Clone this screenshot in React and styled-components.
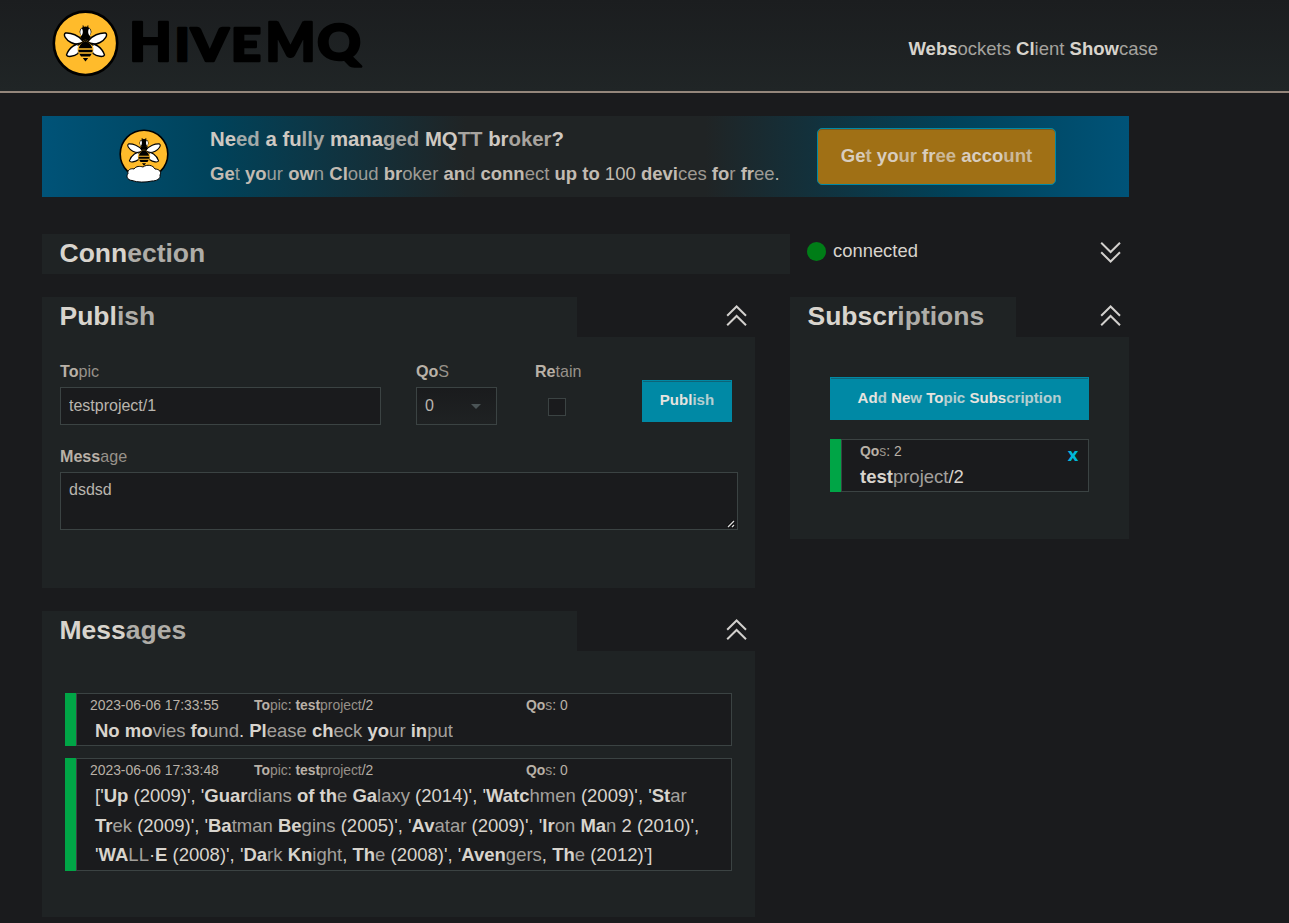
import React from "react";
import styled, { createGlobalStyle } from "styled-components";

const c = {
  page: "#1a1b1d",
  panel: "#1f2324",
  line: "#3b4343",
  teal: "#0089a5",
  green: "#00a546",
  bright: "#d8d4cd",
  muted: "#b9b1a7",
};

const GlobalStyle = createGlobalStyle`
  * { box-sizing: border-box; }
  html, body { margin: 0; background: ${c.page}; }
  body {
    height: 923px;
    overflow: hidden;
    color: ${c.bright};
    font-family: "Liberation Sans", Arial, sans-serif;
    font-size: 18.5px;
  }
  h1, h2, p { margin: 0; }
  svg { display: block; }
`;

const Lead = styled.b`
  font-weight: 700;
`;
const Tail = styled.span`
  opacity: ${(p) => p.$opacity};
`;

/* Emphasises the first letters of every word and fades the rest. */
const leadLength = (n) => (n < 2 ? n : n < 7 ? 2 : n < 13 ? 4 : 6);
function Bionic({ children, fade = 0.78 }) {
  return children.split(/([A-Za-z]+)/).map((part, i) => {
    if (i % 2 === 0) return part;
    const n = leadLength(part.length);
    return (
      <React.Fragment key={i}>
        <Lead>{part.slice(0, n)}</Lead>
        {part.length > n && <Tail $opacity={fade}>{part.slice(n)}</Tail>}
      </React.Fragment>
    );
  });
}

const Header = styled.header`
  display: flex;
  justify-content: space-between;
  align-items: flex-start;
  height: 93px;
  padding: 0 131px 0 52px;
  border-bottom: 2px solid #94867b;
  background: linear-gradient(#1b1d1f, #202526);
`;
const Tagline = styled.p`
  padding-top: 38px;
  line-height: 22px;
`;
const Page = styled.main`
  width: 1087px;
  margin: 23px 0 0 42px;
`;
const Banner = styled.section`
  display: flex;
  height: 81px;
  background: linear-gradient(
    90deg,
    #005378 0%,
    #00425a 16%,
    #202425 39%,
    #202425 61%,
    #00425a 84%,
    #005378 100%
  );
`;
const BannerIcon = styled.div`
  width: 168px;
  padding: 13px 0 0 77px;
`;
const BannerText = styled.div`
  width: 607px;
  padding-top: 11px;
  white-space: nowrap;
`;
const BannerTitle = styled.h2`
  font-size: 20.35px;
  line-height: 24px;
  color: #cfc9c2;
`;
const BannerLine = styled.p`
  padding-top: 11px;
  line-height: 23px;
  color: #c2bbb2;
`;
const AccountButton = styled.button`
  width: 239px;
  height: 57px;
  margin-top: 12px;
  padding: 0 0 1px;
  border: 1px solid #0089a5;
  border-radius: 5px;
  background: #a07015;
  box-shadow: inset 0 1px 0 #7d5a1c;
  color: #d8cdbf;
  font: 700 18.5px "Liberation Sans", Arial, sans-serif;
`;

const Row = styled.div`
  display: flex;
  align-items: flex-start;
  margin-top: ${(p) => p.$top}px;
`;
const Column = styled.div`
  width: ${(p) => p.$width}px;
  margin-right: ${(p) => p.$gap || 0}px;
`;
const PanelHead = styled.div`
  display: flex;
  justify-content: space-between;
  height: 40px;
  padding-right: 8px;
`;
const Title = styled.h1`
  width: ${(p) => p.$width}px;
  height: 40px;
  padding-left: 17.5px;
  background: ${c.panel};
  font-size: 26.5px;
  line-height: 38px;
`;
const PanelBody = styled.div`
  height: ${(p) => p.$height}px;
  padding: ${(p) => p.$padding};
  background: ${c.panel};
`;
const ToggleIcon = styled.svg`
  width: 21px;
  height: 22px;
  margin-top: ${(p) => (p.$down ? 0 : 8)}px;
  fill: none;
  stroke: #d2d0cd;
  stroke-width: 2;
  transform: ${(p) => (p.$down ? "scaleY(-1)" : "none")};
`;
const Status = styled.div`
  display: flex;
  align-items: center;
  width: 339px;
  height: 35px;
  padding: 0 8px 0 17px;
`;
const Dot = styled.span`
  width: 19px;
  height: 19px;
  margin-right: 7px;
  border-radius: 50%;
  background: #007d17;
`;
const StatusText = styled.span`
  flex: 1;
  padding-bottom: 2px;
  font-size: 18.4px;
`;

const Form = styled.div`
  display: flex;
`;
const Field = styled.div`
  width: ${(p) => p.$width}px;
`;
const Label = styled.label`
  display: block;
  height: 26px;
  color: ${c.muted};
  font-size: 16.1px;
  line-height: 20px;
`;
const Input = styled.input`
  display: block;
  width: 321px;
  height: 38px;
  padding: 0 8px 1px;
  border: 1px solid ${c.line};
  border-radius: 0;
  outline: 0;
  background: ${c.page};
  color: #b9b5ae;
  font: 16px "Liberation Sans", Arial, sans-serif;
`;
const Select = styled.div`
  display: flex;
  align-items: center;
  justify-content: space-between;
  width: 81px;
  height: 38px;
  padding: 0 15px 1px 8px;
  border: 1px solid ${c.line};
  background: linear-gradient(${c.page}, #1f2223);
  color: #b9b5ae;
  font-size: 16px;
`;
const Caret = styled.span`
  border: 5px solid transparent;
  border-top-color: #4b5456;
  border-bottom: 0;
  margin-top: 1px;
`;
const Checkbox = styled.div`
  width: 18px;
  height: 18px;
  margin: 11px 0 0 13px;
  border: 1px solid ${c.line};
  background: ${c.page};
`;
const TealButton = styled.button`
  width: ${(p) => p.$width}px;
  height: ${(p) => p.$height}px;
  margin-top: ${(p) => p.$top || 0}px;
  padding: 0 0 3px;
  border: 1px solid ${c.teal};
  background: ${c.teal};
  box-shadow: inset 0 1px 0 #0e6478;
  color: #e6e3df;
  font: 700 15.05px "Liberation Sans", Arial, sans-serif;
`;
const MessageField = styled.div`
  margin-top: 21px;
`;
const TextBox = styled.div`
  display: flex;
  justify-content: space-between;
  align-items: flex-end;
  width: 678px;
  height: 58px;
  padding-left: 8px;
  border: 1px solid ${c.line};
  background: ${c.page};
`;
const TextValue = styled.span`
  align-self: flex-start;
  padding-top: 7px;
  color: #b9b5ae;
  font-size: 16px;
  line-height: 20px;
`;

const Card = styled.article`
  display: flex;
  height: ${(p) => p.$height}px;
  margin-bottom: 12px;
`;
const Stripe = styled.div`
  width: 11px;
  background: ${c.green};
`;
const CardBody = styled.div`
  flex: 1;
  padding-left: ${(p) => p.$inset}px;
  border: 1px solid ${c.line};
  background: ${c.page};
`;
const Meta = styled.div`
  display: flex;
  height: 22px;
  color: ${c.muted};
  font-size: 13.88px;
  line-height: 23px;
`;
const MetaItem = styled.span`
  width: ${(p) => p.$width}px;
`;
const Payload = styled.p`
  padding-left: ${(p) => p.$indent || 0}px;
  line-height: 29.5px;
`;
const Line = styled.span`
  display: block;
  white-space: nowrap;
`;
const SubscriptionBody = styled.div`
  display: flex;
  justify-content: space-between;
  padding-right: 9.5px;
`;
const Remove = styled.span`
  padding-top: 6px;
  color: #00b7d8;
  font: 700 17px/18px "DejaVu Sans", sans-serif;
`;

function Bee() {
  return (
    <g>
      <g fill="#fff" stroke="#000" strokeWidth="1.400" strokeLinejoin="round">
        <path d="M31 31C27 25.500 19 22.500 13.500 23C10.500 24.500 14 30 19 32.500C23 34.500 28 34.500 31 33Z" />
        <path d="M36 31C40 25.500 48 22.500 53.500 23C56.500 24.500 53 30 48 32.500C44 34.500 39 34.500 36 33Z" />
        <path d="M31 33C24 33 17 37.500 14.500 45C15.500 47.500 22 46.500 26 43.500C27 40 28.500 36.500 32 34Z" />
        <path d="M36 33C43 33 50 37.500 52.500 45C51.500 47.500 45 46.500 41 43.500C40 40 38.500 36.500 35 34Z" />
      </g>
      <path d="M31.500 18L31 15.500M35.500 18L36 15.500" stroke="#000" strokeWidth="1.100" />
      <ellipse cx="33.500" cy="21.800" rx="5.900" ry="5.200" fill="#000" />
      <path d="M29.800 18.300C27.800 20.500 27.800 23.500 29.500 25.800C31.200 23.500 31.300 20.500 29.800 18.300ZM37.200 18.300C39.200 20.500 39.200 23.500 37.500 25.800C35.800 23.500 35.700 20.500 37.200 18.300Z" fill="#fff" />
      <path d="M28.500 26H38.500L37 31H30Z" fill="#000" />
      <path d="M33.500 29.500C29.500 31.500 25.500 35 25.500 39C25.500 43 28 46 30 47H37C39 46 41.500 43 41.500 39C41.500 35 37.500 31.500 33.500 29.500Z" fill="#ffbb2b" />
      <path d="M33.500 31C31 32 27.500 34.500 26.800 38.300H40.200C39.500 34.500 36 32 33.500 31Z" fill="#000" />
      <path d="M26.300 39.700H40.700L40.300 42.200H26.700ZM27.300 43.700H39.700L38 46.500H29Z" fill="#000" />
      <path d="M30.800 48H36.200L33.500 51.500Z" fill="#000" />
      <path d="M25.500 35.500L33.500 30L41.500 35.500" fill="none" stroke="#000" strokeWidth="1.200" />
    </g>
  );
}

const letters = [
  ["H", 129.300, 61.200, 52.500, 42.500],
  ["I", 174.800, 61.200, 46, 15],
  ["V", 191, 61.200, 46, 37.500],
  ["E", 231, 61.200, 46, 30],
  ["M", 265.500, 61.200, 52.500, 50],
  ["Q", 317.300, 60, 50, 43.500],
];

function Logo() {
  return (
    <svg width="330" height="90" viewBox="52 0 330 90">
      <circle cx="85.500" cy="43.300" r="31.700" fill="#ffbb2b" stroke="#000" strokeWidth="2.600" />
      <g transform="translate(52 10)">
        <Bee />
      </g>
      <g fontFamily="Lato, sans-serif" fontWeight="900" fill="#000" stroke="#000" strokeWidth="2.600" strokeLinejoin="round">
        {letters.map(([ch, x, y, size, w]) => (
          <text key={ch} x={x} y={y} fontSize={size} textLength={w} lengthAdjust="spacingAndGlyphs">
            {ch}
          </text>
        ))}
      </g>
    </svg>
  );
}

function CloudBee() {
  return (
    <svg width="50" height="56" viewBox="0 0 50 56">
      <circle cx="25" cy="25" r="23.800" fill="#ffbb2b" stroke="#000" strokeWidth="1.600" />
      <g transform="translate(-0.800 -2.800) scale(0.770)">
        <Bee />
      </g>
      <path
        d="M13 51.500C8 51 7 47 9 44.500C8 41 12 39 15 40C17 37 21 37 24 38C28 35 34 36 36 40C40 40 43 43 41 46C42 50 37 52 33 52C27 53.500 18 53.500 13 51.500Z"
        fill="#fff"
        stroke="#000"
        strokeWidth="1"
      />
    </svg>
  );
}

const Toggle = ({ down }) => (
  <ToggleIcon viewBox="0 0 21 22" $down={down}>
    <path d="M1.200 10.700L10.600 1.500L20 10.700M1.200 20.200L10.600 11L20 20.200" />
  </ToggleIcon>
);

function MessageCard({ time, topic, qos, height, lines }) {
  return (
    <Card $height={height}>
      <Stripe />
      <CardBody $inset={13}>
        <Meta>
          <MetaItem $width={164}>{time}</MetaItem>
          <MetaItem $width={272}>
            <Bionic>{`Topic: ${topic}`}</Bionic>
          </MetaItem>
          <MetaItem>
            <Bionic>{`Qos: ${qos}`}</Bionic>
          </MetaItem>
        </Meta>
        <Payload $indent={5}>
          {lines.map((line) => (
            <Line key={line}>
              <Bionic fade={0.72}>{line}</Bionic>
            </Line>
          ))}
        </Payload>
      </CardBody>
    </Card>
  );
}

export default function App() {
  return (
    <>
      <GlobalStyle />
      <Header>
        <Logo />
        <Tagline>
          <Bionic fade={0.72}>Websockets Client Showcase</Bionic>
        </Tagline>
      </Header>
      <Page>
        <Banner>
          <BannerIcon>
            <CloudBee />
          </BannerIcon>
          <BannerText>
            <BannerTitle>
              <Bionic>Need a fully managed MQTT broker?</Bionic>
            </BannerTitle>
            <BannerLine>
              <Bionic>Get your own Cloud broker and connect up to 100 devices for free.</Bionic>
            </BannerLine>
          </BannerText>
          <AccountButton>
            <Bionic>Get your free account</Bionic>
          </AccountButton>
        </Banner>

        <Row $top={37}>
          <Title $width={748}>
            <Bionic>Connection</Bionic>
          </Title>
          <Status>
            <Dot />
            <StatusText>connected</StatusText>
            <Toggle down />
          </Status>
        </Row>

        <Row $top={23}>
          <Column $width={713} $gap={35}>
            <PanelHead>
              <Title $width={535}>
                <Bionic>Publish</Bionic>
              </Title>
              <Toggle />
            </PanelHead>
            <PanelBody $height={251} $padding="24px 17px 0 18px">
              <Form>
                <Field $width={356}>
                  <Label><Bionic>Topic</Bionic></Label>
                  <Input defaultValue="testproject/1" />
                </Field>
                <Field $width={119}>
                  <Label><Bionic>QoS</Bionic></Label>
                  <Select>
                    0
                    <Caret />
                  </Select>
                </Field>
                <Field $width={107}>
                  <Label><Bionic>Retain</Bionic></Label>
                  <Checkbox />
                </Field>
                <TealButton $width={90} $height={42} $top={19}>
                  <Bionic>Publish</Bionic>
                </TealButton>
              </Form>
              <MessageField>
                <Label><Bionic>Message</Bionic></Label>
                <TextBox>
                  <TextValue>dsdsd</TextValue>
                  <svg width="10" height="10" viewBox="0 0 10 10">
                    <path d="M1 8L7 2M5 8L7 6" stroke="#000" strokeWidth="3" />
                    <path d="M1 8L7 2M5 8L7 6" stroke="#ddd" strokeWidth="1.400" />
                  </svg>
                </TextBox>
              </MessageField>
            </PanelBody>
          </Column>
          <Column $width={339}>
            <PanelHead>
              <Title $width={226}>
                <Bionic>Subscriptions</Bionic>
              </Title>
              <Toggle />
            </PanelHead>
            <PanelBody $height={202} $padding="40px 40px 0">
              <TealButton $width={259} $height={43}>
                <Bionic>Add New Topic Subscription</Bionic>
              </TealButton>
              <Row $top={19}>
                <Column $width={259}>
                  <Card $height={53}>
                    <Stripe />
                    <CardBody $inset={18}>
                      <SubscriptionBody>
                        <div>
                          <Meta><span><Bionic>Qos: 2</Bionic></span></Meta>
                          <Payload><Bionic fade={0.72}>testproject/2</Bionic></Payload>
                        </div>
                        <Remove>x</Remove>
                      </SubscriptionBody>
                    </CardBody>
                  </Card>
                </Column>
              </Row>
            </PanelBody>
          </Column>
        </Row>

        <Row $top={23}>
          <Column $width={713}>
            <PanelHead>
              <Title $width={535}>
                <Bionic>Messages</Bionic>
              </Title>
              <Toggle />
            </PanelHead>
            <PanelBody $height={266} $padding="42px 23px 0">
              <MessageCard
                time="2023-06-06 17:33:55"
                topic="testproject/2"
                qos="0"
                height={53}
                lines={["No movies found. Please check your input"]}
              />
              <MessageCard
                time="2023-06-06 17:33:48"
                topic="testproject/2"
                qos="0"
                height={113}
                lines={[
                  "['Up (2009)', 'Guardians of the Galaxy (2014)', 'Watchmen (2009)', 'Star",
                  "Trek (2009)', 'Batman Begins (2005)', 'Avatar (2009)', 'Iron Man 2 (2010)',",
                  "'WALL·E (2008)', 'Dark Knight, The (2008)', 'Avengers, The (2012)']",
                ]}
              />
            </PanelBody>
          </Column>
        </Row>
      </Page>
    </>
  );
}
